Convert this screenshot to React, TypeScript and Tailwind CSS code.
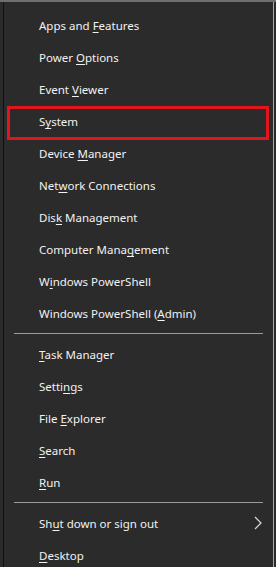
import React from "react";

type Item = { pre: string; key: string; post: string; arrow?: boolean };

const group1: Item[] = [
  { pre: "Apps and ", key: "F", post: "eatures" },
  { pre: "Power ", key: "O", post: "ptions" },
  { pre: "Event ", key: "V", post: "iewer" },
  { pre: "S", key: "y", post: "stem" },
  { pre: "Device ", key: "M", post: "anager" },
  { pre: "Net", key: "w", post: "ork Connections" },
  { pre: "Dis", key: "k", post: " Management" },
  { pre: "Computer Mana", key: "g", post: "ement" },
  { pre: "W", key: "i", post: "ndows PowerShell" },
  { pre: "Windows PowerShell (", key: "A", post: "dmin)" },
];

const group2: Item[] = [
  { pre: "", key: "T", post: "ask Manager" },
  { pre: "Setti", key: "n", post: "gs" },
  { pre: "File ", key: "E", post: "xplorer" },
  { pre: "", key: "S", post: "earch" },
  { pre: "", key: "R", post: "un" },
];

const group3: Item[] = [
  { pre: "Sh", key: "u", post: "t down or sign out", arrow: true },
  { pre: "", key: "D", post: "esktop" },
];

function Row({ item, boxed }: { item: Item; boxed?: boolean }) {
  return (
    <div className="relative h-[32px] flex items-center pl-[35px] pr-[11px] text-[11.5px] text-[#f2f2f2] whitespace-nowrap">
      <span className="flex-1 pt-[2px]">
        {item.pre}
        <span className="underline underline-offset-[2px]">{item.key}</span>
        {item.post}
      </span>
      {item.arrow && (
        <svg width="8" height="14" viewBox="0 0 8 14">
          <path d="M1 1 L7 7 L1 13" fill="none" stroke="#d8d8d8" strokeWidth="1.2" />
        </svg>
      )}
      {boxed && (
        <div className="absolute left-[3px] top-[1px] w-[262px] h-[34px] border-[3px] border-[#e3141b]" />
      )}
    </div>
  );
}

function Sep() {
  return (
    <div className="h-[9px] flex items-center pl-[10px] pr-[10px]">
      <div className="h-px w-full bg-[#9a9a9a]" />
    </div>
  );
}

export default function App() {
  return (
    <div
      className="w-[276px] h-[567px] overflow-hidden bg-[#2b2b2b] pl-[3px] pr-[2px] border-t-2 border-t-[#6e6e6e]"
      style={{ fontFamily: '"Noto Sans", "Open Sans", sans-serif' }}
    >
      <div className="h-full border-l border-l-[#0f0f0f] border-r border-r-[#a8a8a8] pt-[7px]">
        {group1.map((it, i) => (
          <Row key={"a" + i} item={it} boxed={i === 3} />
        ))}
        <Sep />
        {group2.map((it, i) => (
          <Row key={"b" + i} item={it} />
        ))}
        <Sep />
        {group3.map((it, i) => (
          <Row key={"c" + i} item={it} />
        ))}
      </div>
    </div>
  );
}
